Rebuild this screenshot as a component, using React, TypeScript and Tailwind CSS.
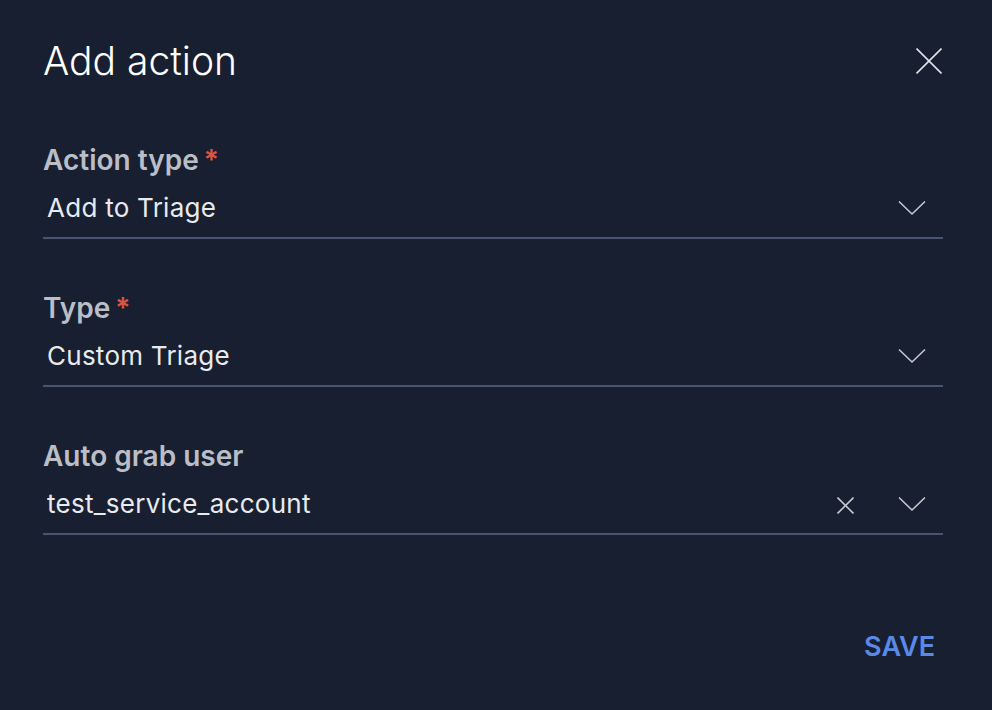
function Chevron() {
  return (
    <svg width="28" height="16" viewBox="0 0 28 16" fill="none" className="mr-[17px] text-[#c4c8cf]">
      <polyline points="1,1.5 14,14 27,1.5" stroke="currentColor" strokeWidth="1.6" />
    </svg>
  )
}

function Cross({ size, stroke }: { size: number; stroke: number }) {
  return (
    <svg width={size} height={size} viewBox={`0 0 ${size} ${size}`} fill="none">
      <line x1="0.5" y1="0.5" x2={size - 0.5} y2={size - 0.5} stroke="currentColor" strokeWidth={stroke} />
      <line x1={size - 0.5} y1="0.5" x2="0.5" y2={size - 0.5} stroke="currentColor" strokeWidth={stroke} />
    </svg>
  )
}

function Field({ label, value, required, clearable }: { label: string; value: string; required?: boolean; clearable?: boolean }) {
  return (
    <div className="flex flex-col">
      <div className="text-[28px] leading-[32px] font-semibold text-[#b9bec7]">
        {label}
        {required && <span className="ml-[5px] text-[#e0533f]">*</span>}
      </div>
      <div className="mt-[16px] box-border flex h-[47px] items-center border-b-2 border-[#48556f] pb-[13px]">
        <span className="flex-1 pl-[4px] text-[26px] leading-[32px] tracking-[0.01em] text-[#e8eaee]">{value}</span>
        {clearable && (
          <button type="button" className="mt-[2px] mr-[44px] text-[#c4c8cf]" aria-label="Clear">
            <Cross size={17} stroke={1.6} />
          </button>
        )}
        <Chevron />
      </div>
    </div>
  )
}

export default function App() {
  return (
    <div className="flex h-[710px] w-[992px] flex-col bg-[#181f30] pt-[38px] pr-[49px] pl-[43px] font-['Inter',sans-serif]">
      <div className="flex h-[46px] items-center justify-between">
        <h2 className="text-[39px] leading-[46px] font-light text-white">Add action</h2>
        <button type="button" className="mr-[1px] text-[#dfe2e7]" aria-label="Close">
          <Cross size={26} stroke={1.6} />
        </button>
      </div>

      <div className="mt-[60px] flex flex-col gap-[53px]">
        <Field label="Action type" value="Add to Triage" required />
        <Field label="Type" value="Custom Triage" required />
        <Field label="Auto grab user" value="test_service_account" clearable />
      </div>

      <div className="mt-[96px] flex justify-end">
        <button type="button" className="pr-[8px] text-[27px] leading-[32px] font-semibold text-[#5a8ae8]">SAVE</button>
      </div>
    </div>
  )
}
